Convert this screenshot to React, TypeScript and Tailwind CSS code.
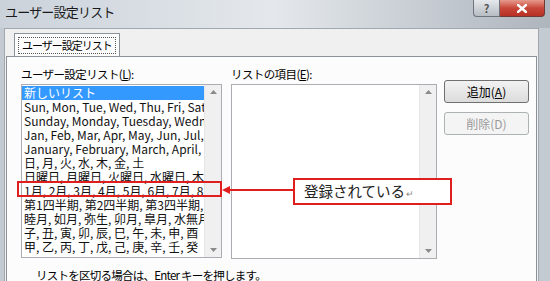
import React from "react";

const items = [
  "新しいリスト",
  "Sun, Mon, Tue, Wed, Thu, Fri, Sat",
  "Sunday, Monday, Tuesday, Wednesday, Thursday",
  "Jan, Feb, Mar, Apr, May, Jun, Jul, Aug",
  "January, February, March, April, May",
  "日, 月, 火, 水, 木, 金, 土",
  "日曜日, 月曜日, 火曜日, 水曜日, 木曜日",
  "1月, 2月, 3月, 4月, 5月, 6月, 7月, 8月",
  "第1四半期, 第2四半期, 第3四半期, 第4四半期",
  "睦月, 如月, 弥生, 卯月, 皐月, 水無月",
  "子, 丑, 寅, 卯, 辰, 巳, 午, 未, 申, 酉",
  "甲, 乙, 丙, 丁, 戊, 己, 庚, 辛, 壬, 癸",
];

function ScrollBar() {
  return (
    <div className="w-[17px] h-full bg-[#f0f0f0] border-l border-[#e6e6e6] flex flex-col items-center justify-between py-[2px]">
      <svg width="7" height="4" viewBox="0 0 7 4" className="mt-[3px]">
        <path d="M0 4 L3.5 0 L7 4 Z" fill="#8a8a8a" />
      </svg>
      <svg width="7" height="4" viewBox="0 0 7 4" className="mb-[3px]">
        <path d="M0 0 L3.5 4 L7 0 Z" fill="#8a8a8a" />
      </svg>
    </div>
  );
}

export default function App() {
  return (
    <div className="relative w-[550px] h-[281px] overflow-hidden bg-[#c9d0d8] font-['Noto_Sans_CJK_JP',sans-serif] text-black">
      {/* Title bar */}
      <div className="h-[28px] flex items-start bg-gradient-to-r from-[#cbd2da] via-[#e4e8ec] to-[#aeb5bd]">
        <div className="pl-[5px] pt-[3px] text-[13px] leading-[18px] text-[#1a1a1a] tracking-[-0.8px]">
          ユーザー設定リスト
        </div>
        <div className="ml-auto mr-[5px] flex">
          <div className="w-[27px] h-[17px] flex items-center justify-center bg-gradient-to-b from-[#e6e9ec] to-[#b6bcc3] border border-[#6e747b] border-t-0 rounded-bl-[4px] text-[11px] leading-none text-[#555] font-bold">
            ?
          </div>
          <div className="w-[45px] h-[17px] flex items-center justify-center bg-gradient-to-b from-[#e59a8e] via-[#c8463a] to-[#b73023] border border-[#6e3a34] border-t-0 border-l-0 rounded-br-[4px]">
            <svg width="10" height="9" viewBox="0 0 10 9">
              <path d="M1 1 L9 8 M9 1 L1 8" stroke="#fff" strokeWidth="2.4" strokeLinecap="square" />
            </svg>
          </div>
        </div>
      </div>

      {/* Body with frame */}
      <div className="flex h-[253px]">
        <div className="w-[4px] bg-[#c3cad2]" />
        <div className="flex-1 bg-[#f0f0f0] border-l border-t border-[#a0a7ae] pt-[4px] pl-[1px] pr-[1px] flex flex-col">
          {/* Tab header */}
          <div className="flex pl-[8px]">
            <div className="h-[24px] px-[3px] pt-[3px] bg-[#fcfcfc] border border-b-0 border-[#8d9299] text-[11px] leading-none tracking-[-1px]">
              <div className="border border-dotted border-[#555] px-[3px] py-[2px]">
                ユーザー設定リスト
              </div>
            </div>
          </div>
          {/* Panel */}
          <div className="flex-1 bg-[#fcfcfc] border border-[#8d9299] -mt-px pl-[14px] pr-[6px] pt-[10px] flex flex-col">
            <div className="flex gap-[9px]">
              {/* Left column */}
              <div className="w-[201px] flex flex-col">
                <div className="text-[11.5px] leading-[14px] mb-[3px] tracking-[-0.6px]">
                  ユーザー設定リスト(<span className="underline">L</span>):
                </div>
                <div className="h-[174px] bg-white border border-[#abadb3] flex overflow-hidden">
                  <div className="flex-1 overflow-hidden pt-px">
                    {items.map((t, i) => (
                      <div
                        key={i}
                        className={
                          "h-[14px] text-[12px] leading-[14px] whitespace-nowrap pl-[2px] " +
                          (i === 0 ? "bg-[#3399ff] text-white" : "text-[#111]")
                        }
                      >
                        {t}
                      </div>
                    ))}
                  </div>
                  <ScrollBar />
                </div>
              </div>
              {/* Right column */}
              <div className="w-[206px] flex flex-col">
                <div className="text-[11.5px] leading-[14px] mb-[3px] tracking-[-0.6px]">
                  リストの項目(<span className="underline">E</span>):
                </div>
                <div className="h-[175px] bg-white border border-[#abadb3] flex justify-end">
                  <ScrollBar />
                </div>
              </div>
              {/* Buttons */}
              <div className="flex flex-col gap-[9px] pt-[13px] -ml-[2px]">
                <div className="w-[85px] h-[23px] rounded-[3px] border border-[#707070] bg-gradient-to-b from-[#f2f2f2] to-[#dcdcdc] flex items-center justify-center text-[12px] leading-none">
                  追加(<span className="underline">A</span>)
                </div>
                <div className="w-[85px] h-[23px] rounded-[3px] border border-[#adb2b5] bg-[#f4f4f4] flex items-center justify-center text-[12px] leading-none text-[#9a9a9a]">
                  削除(D)
                </div>
              </div>
            </div>
            <div className="pl-[15px] pt-[9px] text-[11.5px] leading-[14px] tracking-[-0.75px]">
              リストを区切る場合は、Enter キーを押します。
            </div>
          </div>
        </div>
        <div className="w-[12px] bg-[#c3cad2] border-l border-[#a0a7ae]" />
      </div>

      {/* Annotation overlay */}
      <div className="absolute left-[17px] top-[181px] w-[205px] h-[16px] border-2 border-[#e01e1e]" />
      <svg className="absolute left-[221px] top-[184px]" width="74" height="12" viewBox="0 0 74 12">
        <path d="M73 6 L8 6" stroke="#e01e1e" strokeWidth="2" />
        <path d="M1 6 L9 2 L9 10 Z" fill="#e01e1e" />
      </svg>
      <div className="absolute left-[293px] top-[178px] w-[159px] h-[27px] bg-white border-2 border-[#e01e1e] flex items-center pl-[9px] text-[14.5px] leading-none text-[#222]">
        登録されている<span className="text-[9px] text-[#888] ml-px mt-[3px]">↵</span>
      </div>
    </div>
  );
}
